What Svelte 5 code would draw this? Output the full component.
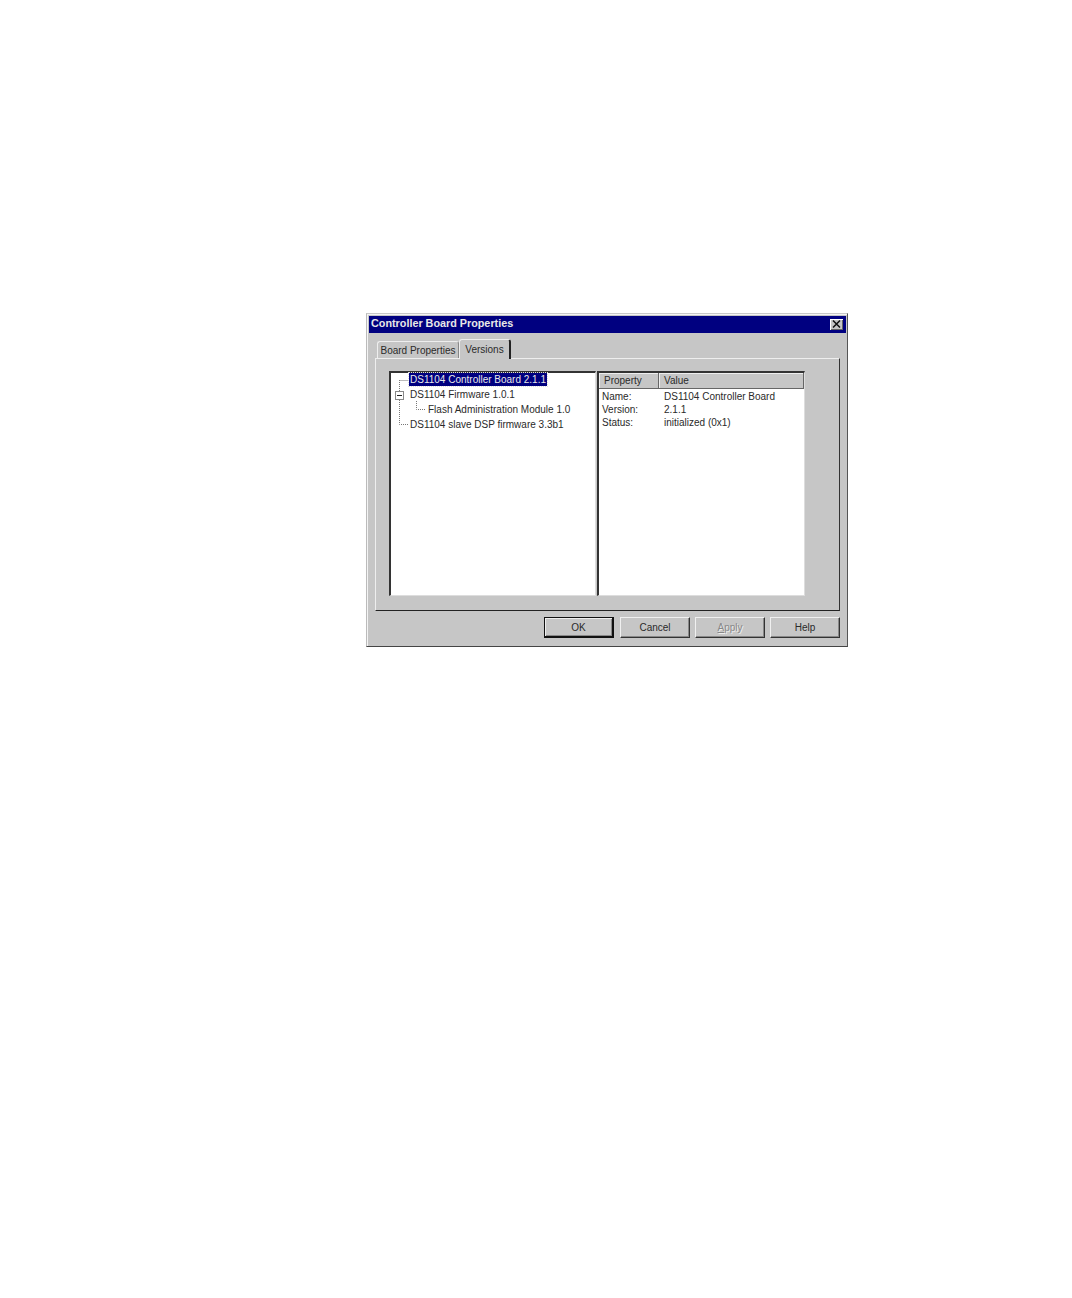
<script lang="ts">
	const treeItems = [
		{ label: 'DS1104 Controller Board 2.1.1', level: 0, selected: true },
		{ label: 'DS1104 Firmware 1.0.1', level: 0, selected: false },
		{ label: 'Flash Administration Module 1.0', level: 1, selected: false },
		{ label: 'DS1104 slave DSP firmware 3.3b1', level: 0, selected: false }
	];

	const properties = [
		{ name: 'Name:', value: 'DS1104 Controller Board' },
		{ name: 'Version:', value: '2.1.1' },
		{ name: 'Status:', value: 'initialized (0x1)' }
	];

	const buttons = [
		{ label: 'OK', cls: 'default' },
		{ label: 'Cancel', cls: '' },
		{ label: 'Apply', cls: 'disabled' },
		{ label: 'Help', cls: '' }
	];
</script>

<div class="dialog">
	<div class="titlebar">
		<span class="title">Controller Board Properties</span>
		<span class="close">
			<svg width="9" height="8" viewBox="0 0 9 8">
				<path d="M1 0.5 L8 7.5 M8 0.5 L1 7.5" stroke="#111" stroke-width="1.5" fill="none" />
			</svg>
		</span>
	</div>

	<div class="tabs">
		<div class="tab">Board Properties</div>
		<div class="tab active">Versions</div>
	</div>

	<div class="page">
		<div class="tree">
			<svg class="lines" width="36" height="56" viewBox="0 0 36 56">
				<g stroke="#777" stroke-width="1" stroke-dasharray="1 1" fill="none">
					<path d="M8.5 7 V18" />
					<path d="M8.5 7.5 H18" />
					<path d="M8.5 27 V51.5 H18" />
					<path d="M25.5 28 V36.5 H34" />
				</g>
				<rect x="4.5" y="18.5" width="8" height="8" fill="#fff" stroke="#888" />
				<path d="M6 22.5 H11" stroke="#222" />
			</svg>
			{#each treeItems as item}
				<div class="node" class:indent={item.level === 1}>
					<span class="node-label" class:selected={item.selected}>{item.label}</span>
				</div>
			{/each}
		</div>

		<div class="list">
			<div class="list-head">
				<div class="col-prop">Property</div>
				<div class="col-value">Value</div>
			</div>
			<div class="list-body">
				{#each properties as p}
					<div class="list-row">
						<span class="cell-name">{p.name}</span>
						<span class="cell-value">{p.value}</span>
					</div>
				{/each}
			</div>
		</div>
	</div>

	<div class="footer">
		{#each buttons as b}
			<button class={b.cls}>{#if b.label === 'Apply'}<u>A</u>pply{:else}{b.label}{/if}</button>
		{/each}
	</div>
</div>

<style>
	:global(body) {
		margin: 0;
		background: #fff;
	}

	.dialog {
		box-sizing: border-box;
		width: 482px;
		height: 334px;
		margin: 313px 0 0 366px;
		padding: 3px 1px 0 2px;
		background: #c6c6c6;
		border-top: 1px solid #c8c8c8;
		border-left: 1px solid #bbb;
		border-right: 1px solid #555;
		border-bottom: 1px solid #444;
		box-shadow: inset 1px 1px 0 #f4f4f4;
		font-family: 'Liberation Sans', Arial, sans-serif;
		font-size: 10px;
		color: #2a2a2a;
	}

	.titlebar {
		box-sizing: border-box;
		display: flex;
		align-items: center;
		justify-content: space-between;
		height: 17px;
		margin-top: -1px;
		padding: 0 3px 1px 2px;
		background: #000080;
	}

	.title {
		margin-top: -2px;
		color: #e8e8e8;
		font-weight: bold;
		font-size: 10.8px;
	}

	.close {
		display: flex;
		align-items: center;
		justify-content: center;
		width: 13px;
		height: 11px;
		background: #c6c6c6;
		box-shadow: inset 1px 1px 0 #fff, inset -1px -1px 0 #666;
	}

	.tabs {
		display: flex;
		align-items: flex-end;
		height: 25px;
		padding-left: 8px;
		position: relative;
		z-index: 1;
	}

	.tab {
		box-sizing: border-box;
		height: 17px;
		width: 82px;
		padding-top: 3px;
		text-align: center;
		border-top: 1px solid #eee;
		border-left: 1px solid #eee;
		border-right: 1px solid #888;
		border-radius: 3px 3px 0 0;
	}

	.tab.active {
		width: 52px;
		height: 20px;
		margin-bottom: -1px;
		padding-top: 4px;
		background: #c6c6c6;
		border-right: 2px solid #222;
	}

	.page {
		box-sizing: border-box;
		display: flex;
		width: 465px;
		height: 253px;
		margin-left: 6px;
		padding: 12px 0 0 13px;
		border-top: 1px solid #eee;
		border-left: 1px solid #eee;
		border-right: 1px solid #333;
		border-bottom: 1px solid #222;
	}

	.tree {
		box-sizing: border-box;
		position: relative;
		width: 207px;
		height: 225px;
		padding: 0 0 0 18px;
		background: #fff;
		border-top: 2px solid #333;
		border-left: 2px solid #333;
		border-right: 1px solid #ddd;
		border-bottom: 1px solid #ddd;
	}

	.lines {
		position: absolute;
		left: 0;
		top: 0;
		overflow: visible;
	}

	.node {
		position: relative;
		height: 15px;
		line-height: 13px;
		white-space: nowrap;
	}

	.node.indent {
		padding-left: 18px;
	}

	.node-label {
		display: inline-block;
		height: 13px;
		padding: 0 1px;
	}

	.node-label.selected {
		background: #000080;
		color: #e8e8e8;
		outline: 1px dotted #ddd;
	}

	.list {
		box-sizing: border-box;
		width: 208px;
		height: 225px;
		margin-left: 1px;
		background: #fff;
		border-top: 2px solid #333;
		border-left: 2px solid #333;
		border-right: 1px solid #ddd;
		border-bottom: 1px solid #ddd;
	}

	.list-head {
		display: flex;
		height: 15px;
		line-height: 15px;
		background: #c6c6c6;
		border-bottom: 1px solid #666;
	}

	.col-prop {
		box-sizing: border-box;
		width: 60px;
		padding-left: 5px;
		border-right: 1px solid #666;
		box-shadow: inset 1px 1px 0 #eee;
	}

	.col-value {
		flex: 1;
		padding-left: 5px;
		border-right: 1px solid #666;
		box-shadow: inset 1px 1px 0 #eee;
	}

	.list-body {
		padding-top: 1px;
	}

	.list-row {
		display: flex;
		height: 13px;
		line-height: 13px;
	}

	.cell-name {
		width: 65px;
		padding-left: 3px;
		box-sizing: border-box;
	}

	.footer {
		display: flex;
		justify-content: flex-end;
		gap: 5px;
		padding: 6px 6px 0 0;
	}

	button {
		box-sizing: border-box;
		width: 70px;
		height: 21px;
		padding: 0;
		font: inherit;
		color: inherit;
		background: #c6c6c6;
		border: 1px solid;
		border-color: #f0f0f0 #333 #333 #f0f0f0;
		box-shadow: inset -1px -1px 0 #888;
	}

	button.default {
		margin-right: 1px;
		border: 1px solid #111;
		border-right-width: 2px;
		border-bottom-width: 2px;
		box-shadow: inset 1px 1px 0 #eee, inset -1px -1px 0 #888;
	}

	button.disabled {
		color: #888;
		text-shadow: 1px 1px 0 #eee;
	}
</style>
